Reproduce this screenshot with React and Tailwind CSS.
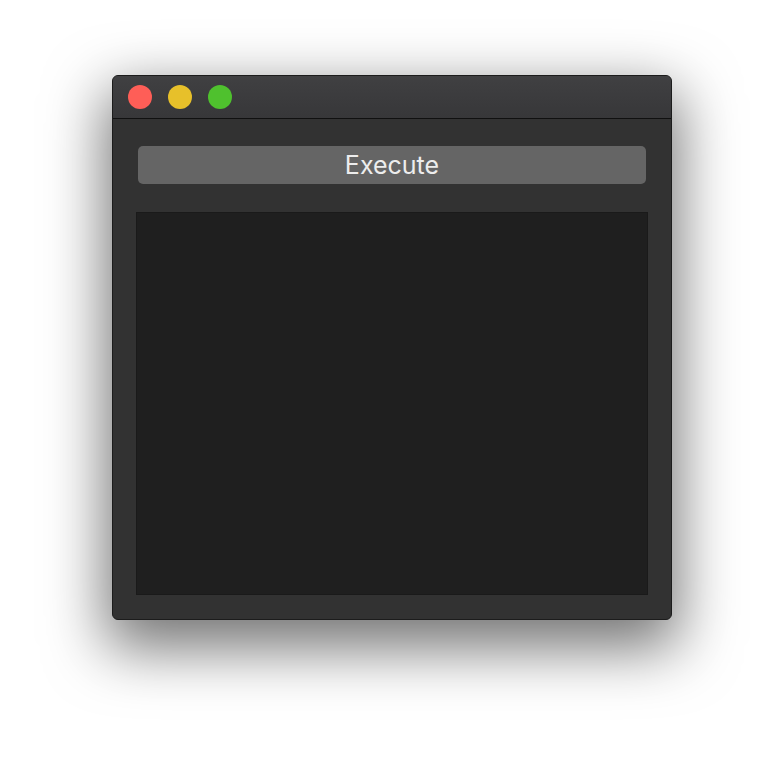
export default function App() {
  return (
    <div className="w-[784px] h-[768px] bg-white pt-[75px] pl-[112px]" style={{ fontFamily: 'Inter, "Noto Sans", sans-serif' }}>
      <div className="w-[560px] h-[545px] rounded-[6px] border border-[#1c1c1c] bg-[#323232] flex flex-col overflow-hidden shadow-[0_22px_60px_6px_rgba(0,0,0,0.55)]">
        <div className="h-[43px] shrink-0 border-b border-[#101010] bg-gradient-to-b from-[#404042] to-[#373739] flex items-center gap-4 pl-[15px]">
          <div className="w-6 h-6 rounded-full bg-[#fe5e57]" />
          <div className="w-6 h-6 rounded-full bg-[#e7c02a]" />
          <div className="w-6 h-6 rounded-full bg-[#4fc12e]" />
        </div>
        <div className="flex-1 flex flex-col px-[23px] pt-[27px] pb-[24px]">
          <button className="mx-[2px] h-[38px] rounded-[5px] bg-[#656565] text-[#ededed] text-[25px] leading-none flex items-center justify-center">
            Execute
          </button>
          <div className="mt-[28px] flex-1 bg-[#1f1f1f] border border-[#1a1a1a]" />
        </div>
      </div>
    </div>
  );
}
